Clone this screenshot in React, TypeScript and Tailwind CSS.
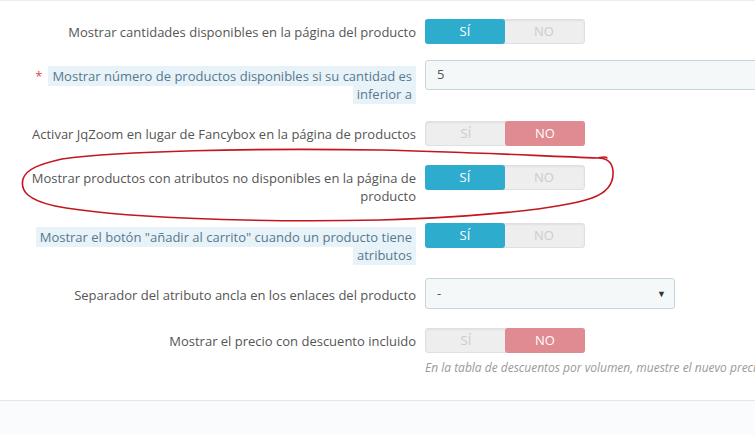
import React from 'react';

type ToggleProps = { on: boolean };

const Toggle = ({ on }: ToggleProps) => (
  <div className="relative flex w-[160px] h-[25px] rounded-[3px] bg-[#eeeeee] border border-[#e0e0e0] shadow-[inset_0_1px_2px_rgba(0,0,0,0.06)] text-[13px] uppercase">
    <div className={`flex-1 flex items-center justify-center rounded-[3px] ${on ? 'bg-[#2eacce] text-white -m-px' : 'text-[#cccccc]'}`}>Sí</div>
    <div className={`flex-1 flex items-center justify-center rounded-[3px] ${!on ? 'bg-[#e08a91] text-white -m-px' : 'text-[#cccccc]'}`}>NO</div>
  </div>
);

const Hint = ({ children }: { children: React.ReactNode }) => (
  <span className="bg-[#e8f3f9] text-[#57788e] px-[4px] py-px [box-decoration-break:clone]">{children}</span>
);

const Row = ({ label, pt, mb, children }: { label: React.ReactNode; pt: string; mb: string; children: React.ReactNode }) => (
  <div className={`flex items-start ${mb}`}>
    <div className={`w-[390px] shrink-0 ml-[26px] text-right text-[13px] leading-[18px] text-[#555555] ${pt}`}>{label}</div>
    <div className="ml-[9px] w-[330px] shrink-0">{children}</div>
  </div>
);

export default function App() {
  return (
    <div className="relative w-[755px] h-[435px] overflow-hidden bg-white font-['Open_Sans',_sans-serif] border-t border-[#ececec]">
      <div className="h-[399px] pt-[18px]">
        <Row label="Mostrar cantidades disponibles en la página del producto" pt="pt-[4px]" mb="mb-[16px]">
          <Toggle on={true} />
        </Row>

        <Row
          pt="pt-[7px]"
          mb="mb-[18px]"
          label={
            <>
              <span className="text-[#e0474c] mr-[6px]">*</span>
              <Hint>Mostrar número de productos disponibles si su cantidad es inferior a</Hint>
            </>
          }
        >
          <div className="w-[360px] h-[30px] rounded-[3px] bg-[#f5f8f9] border border-[#c7d6db] flex items-center px-[11px] text-[13px] text-[#555555]">
            5
          </div>
        </Row>

        <Row label="Activar JqZoom en lugar de Fancybox en la página de productos" pt="pt-[4px]" mb="mb-[19px]">
          <Toggle on={false} />
        </Row>

        <Row label="Mostrar productos con atributos no disponibles en la página de producto" pt="pt-[4px]" mb="mb-[18px]">
          <Toggle on={true} />
        </Row>

        <Row
          pt="pt-[5px]"
          mb="mb-[14px]"
          label={<Hint>Mostrar el botón "añadir al carrito" cuando un producto tiene atributos</Hint>}
        >
          <Toggle on={true} />
        </Row>

        <Row label="Separador del atributo ancla en los enlaces del producto" pt="pt-[8px]" mb="mb-[19px]">
          <div className="w-[250px] h-[31px] rounded-[3px] bg-[#f5f8f9] border border-[#c7d6db] flex items-center justify-between pl-[11px] pr-[8px] text-[13px] text-[#555555]">
            <span>-</span>
            <span className="text-[9px] text-[#333333]">▼</span>
          </div>
        </Row>

        <Row label="Mostrar el precio con descuento incluido" pt="pt-[4px]" mb="mb-0">
          <Toggle on={false} />
          <p className="mt-[6px] text-[12px] italic leading-[18px] text-[#999999] whitespace-nowrap">
            En la tabla de descuentos por volumen, muestre el nuevo precio con el descuento aplicado
          </p>
        </Row>
      </div>

      <div className="h-[35px] border-t border-[#e6e6e6] bg-[#fafbfc]" />

      <svg className="absolute inset-0 pointer-events-none" width="755" height="435" viewBox="0 0 755 435" fill="none">
        <path
          d="M598 157 C606 157 612 160 613 170 C614 183 606 192 592 197 C560 208 480 216 380 219 C250 222 110 216 55 205 C28 199 20 190 23 178 C26 168 40 163 62 158 C120 150 250 147 380 149 C470 151 540 155 598 157 C603 156 606 155 607 157"
          stroke="#c5161d"
          strokeWidth="1.6"
          strokeLinecap="round"
          strokeLinejoin="round"
        />
      </svg>
    </div>
  );
}
